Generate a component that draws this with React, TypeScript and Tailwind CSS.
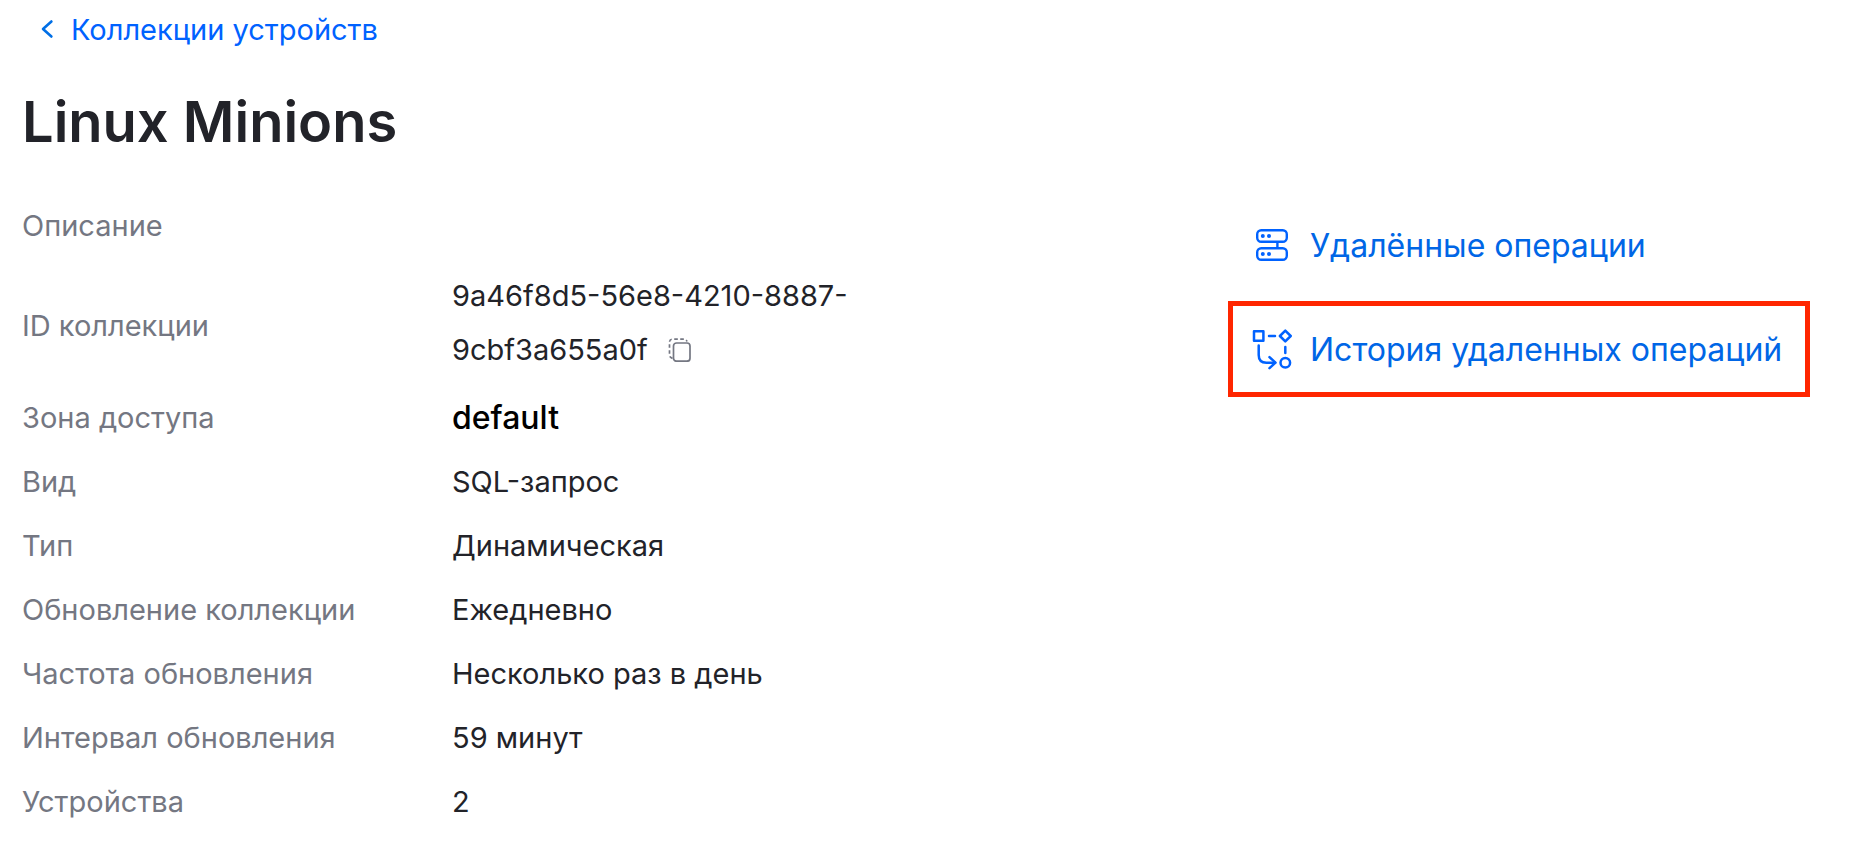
import type { ReactNode } from "react"

interface Property {
  label: string
  value?: ReactNode
  valueClass?: string
  rowClass?: string
}

function ChevronIcon() {
  return (
    <svg className="h-6 w-4" viewBox="0 0 16 24" fill="none" stroke="#006fe6" strokeWidth="2.6" strokeLinecap="round" strokeLinejoin="round" aria-hidden="true">
      <path d="M12.4 3.5 4 11l8.4 7.5" />
    </svg>
  )
}

function CopyIcon() {
  return (
    <svg className="h-6 w-6" viewBox="0 0 24 24" fill="none" stroke="#747782" strokeWidth="1.7" aria-hidden="true">
      <rect x="5.5" y="5" width="16.5" height="18.2" rx="3" />
      <path d="M4.5 20.5C2.5 19.5 1.5 19 1.5 16.5V4.5C1.5 2.5 2.5 1.2 4.5 1.2H15C17 1.2 18.5 2 19 3.5" strokeDasharray="3.6 2.4" />
    </svg>
  )
}

function ServersIcon() {
  return (
    <svg className="h-8 w-8" viewBox="0 0 32 32" fill="none" stroke="#0062ff" strokeWidth="2.4" aria-hidden="true">
      <rect x="1.2" y="1.2" width="29.6" height="11.6" rx="4" />
      <rect x="1.2" y="19.2" width="29.6" height="11.6" rx="4" />
      <path d="M21.4 13v6" />
      <g fill="#0062ff" stroke="none">
        <circle cx="6.8" cy="7" r="2" />
        <circle cx="13" cy="7" r="2" />
        <circle cx="6.8" cy="25" r="2" />
        <circle cx="13" cy="25" r="2" />
      </g>
    </svg>
  )
}

function FlowIcon() {
  return (
    <svg className="h-[42px] w-10" viewBox="0 0 40 42" fill="none" stroke="#0062ff" strokeWidth="2.5" strokeLinecap="round" strokeLinejoin="round" aria-hidden="true">
      <rect x="2" y="3.3" width="9.4" height="9.4" />
      <path d="M17 8h6" />
      <path d="M33.3 2.6 38.7 8l-5.4 5.4L27.9 8z" />
      <path d="M33.3 19v6" />
      <circle cx="33.3" cy="34.7" r="4.8" />
      <path d="M6.7 17.5V27q0 7.7 7.7 7.7H23" />
      <path d="M17.5 29.2 23.5 34.7l-6 5.5" />
    </svg>
  )
}

const properties: Property[] = [
  { label: "Описание", rowClass: "h-20" },
  {
    label: "ID коллекции",
    value: (
      <>
        9a46f8d5-56e8-4210-8887-9cbf3a655a0f
        <button type="button" aria-label="Копировать ID" className="ml-5 inline-flex align-[-2px] leading-none">
          <CopyIcon />
        </button>
      </>
    ),
    valueClass: "pb-1.5 text-[29px] text-[#222329]",
    rowClass: "h-[120px]",
  },
  { label: "Зона доступа", value: "default", valueClass: "text-[32px] font-medium text-black" },
  { label: "Вид", value: "SQL-запрос" },
  { label: "Тип", value: "Динамическая" },
  { label: "Обновление коллекции", value: "Ежедневно" },
  { label: "Частота обновления", value: "Несколько раз в день" },
  { label: "Интервал обновления", value: "59 минут" },
  { label: "Устройства", value: "2" },
]

function PropertyRow({ label, value, valueClass = "text-[29px] text-[#222329]", rowClass = "h-16" }: Property) {
  return (
    <div className={`flex items-center ${rowClass}`}>
      <dt className="w-[430px] shrink-0 text-[#747782]">{label}</dt>
      <dd className={`w-[440px] leading-[54px] ${valueClass}`}>{value}</dd>
    </div>
  )
}

function ActionLink({ icon, children, className }: { icon: ReactNode; children: ReactNode; className: string }) {
  return (
    <a href="#" className={`flex h-24 items-center gap-4 border-[5px] pl-[17px] text-[32px] whitespace-nowrap text-[#0066e6] ${className}`}>
      <span className="flex w-11 shrink-0 items-center justify-center">{icon}</span>
      <span className="pt-0.5">{children}</span>
    </a>
  )
}

export default function App() {
  return (
    <main className="min-h-screen bg-white px-[22px] pb-2 font-['Inter',sans-serif] text-[29px] text-[#222329]">
      <nav className="flex h-[60px] items-center pl-[17px]">
        <a href="#" className="flex items-center gap-4 text-[#0062ff]">
          <ChevronIcon />
          Коллекции устройств
        </a>
      </nav>
      <h1 className="pt-6 text-[56px] leading-[76px] font-semibold">Linux Minions</h1>
      <div className="flex items-start justify-between pt-[26px]">
        <dl>
          {properties.map((property) => (
            <PropertyRow key={property.label} {...property} />
          ))}
        </dl>
        <nav className="mr-9 flex w-[582px] flex-col gap-2 pt-[11px]">
          <ActionLink icon={<ServersIcon />} className="border-transparent">
            Удалённые операции
          </ActionLink>
          <ActionLink icon={<FlowIcon />} className="border-[#ff2600]">
            История удаленных операций
          </ActionLink>
        </nav>
      </div>
    </main>
  )
}
